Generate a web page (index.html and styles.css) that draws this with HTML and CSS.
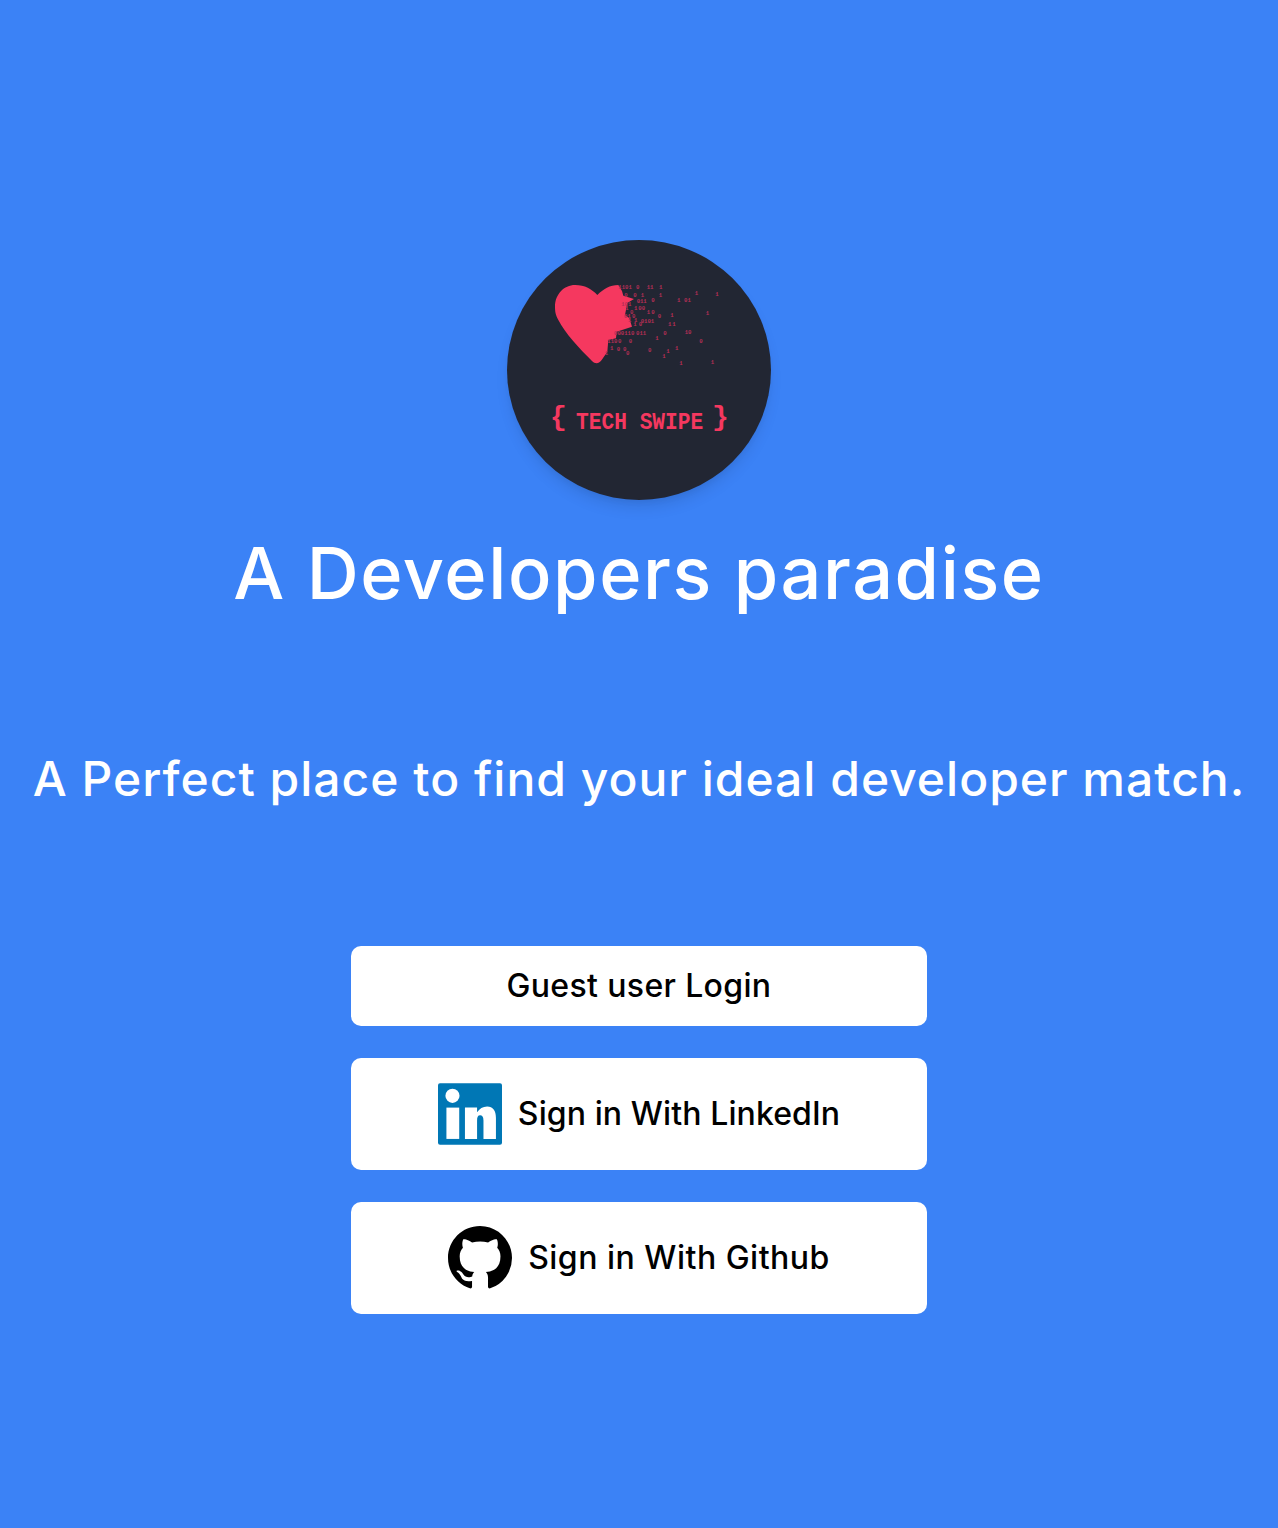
FILE: index.html
```html
<!DOCTYPE html>
<html lang="en">
<head>
  <meta charset="UTF-8">
  <meta name="viewport" content="width=device-width, initial-scale=1.0">
  <title>Tech Swipe</title>
  <link rel="stylesheet" href="styles.css">
</head>
<body>
  <div class="container">
    <!-- Logo -->
    <svg class="logo" viewBox="51 45 792 780" role="img" aria-label="Tech Swipe logo">
      <path class="heart" d="M255 180C285 180 305 192 322 210C340 192 360 180 385 180L396 198L400 212L432 222L412 234L405 270L418 280L426 305L380 320L378 340L355 345L352 380L335 405C328 416 316 418 306 408C270 372 225 325 205 285C196 268 195 258 195 245C195 208 222 180 255 180Z"/>
      <g class="bits">
        <text x="385" y="193">1101</text>
        <text x="438" y="193">0</text>
        <text x="470" y="193">11</text>
        <text x="507" y="193">1</text>
        <text x="403" y="217">0</text>
        <text x="430" y="217">0</text>
        <text x="452" y="217">1</text>
        <text x="506" y="217">1</text>
        <text x="614" y="209">1</text>
        <text x="676" y="214">1</text>
        <text x="440" y="233">01</text>
        <text x="460" y="235">1</text>
        <text x="484" y="231">0</text>
        <text x="561" y="231">1</text>
        <text x="582" y="231">01</text>
        <text x="394" y="242">101</text>
        <text x="406" y="255">1</text>
        <text x="432" y="255">1</text>
        <text x="445" y="255">00</text>
        <text x="420" y="267">0</text>
        <text x="470" y="267">1</text>
        <text x="484" y="267">0</text>
        <text x="402" y="279">01</text>
        <text x="426" y="279">0</text>
        <text x="503" y="279">0</text>
        <text x="541" y="275">1</text>
        <text x="647" y="270">1</text>
        <text x="414" y="291">1</text>
        <text x="432" y="291">1</text>
        <text x="452" y="293">0101</text>
        <text x="430" y="304">1</text>
        <text x="446" y="304">0</text>
        <text x="534" y="304">1</text>
        <text x="547" y="304">1</text>
        <text x="372" y="329">000110</text>
        <text x="438" y="329">011</text>
        <text x="520" y="329">0</text>
        <text x="584" y="328">10</text>
        <text x="352" y="353">1</text>
        <text x="362" y="353">10</text>
        <text x="384" y="353">0</text>
        <text x="416" y="353">0</text>
        <text x="496" y="345">1</text>
        <text x="628" y="354">0</text>
        <text x="360" y="376">1</text>
        <text x="380" y="377">0</text>
        <text x="399" y="377">0</text>
        <text x="555" y="374">1</text>
        <text x="474" y="382">0</text>
        <text x="529" y="383">1</text>
        <text x="344" y="389">1</text>
        <text x="408" y="390">0</text>
        <text x="517" y="400">1</text>
        <text x="568" y="419">1</text>
        <text x="662" y="416">1</text>
      </g>
      <text class="logo-brace" x="205" y="600">{</text>
      <text class="logo-name" transform="translate(258 613) scale(0.884 1)">TECH SWIPE</text>
      <text class="logo-brace" x="691" y="600">}</text>
    </svg>

    <h1>A Developers paradise</h1>
    <p class="tagline">A Perfect place to find your ideal developer match.</p>

    <!-- Sign in options -->
    <div class="actions">
      <button class="login-btn guest-btn">Guest user Login</button>
      <button class="login-btn linkedin-btn">
        <svg class="icon" viewBox="295 96 190 190">
          <rect class="in-bg" x="295" y="100" width="190" height="182" rx="6"/>
          <rect class="in-fg" x="320" y="172" width="38" height="93"/>
          <circle class="in-fg" cx="338" cy="137" r="21"/>
          <path class="in-fg" d="M375 172H411V186C418 176 428 169 441 169C458 169 467 181 467 203V265H430V210C430 200 426 195 420 195C413 195 411 201 411 210V265H375Z"/>
        </svg>
        Sign in With LinkedIn
      </button>
      <button class="login-btn github-btn">
        <svg class="icon" viewBox="0 0 16 16">
          <path d="M8 0C3.58 0 0 3.58 0 8c0 3.54 2.29 6.53 5.47 7.59.4.07.55-.17.55-.38 0-.19-.01-.82-.01-1.49-2.01.37-2.53-.49-2.69-.94-.09-.23-.48-.94-.82-1.13-.28-.15-.68-.52-.01-.53.63-.01 1.08.58 1.23.82.72 1.21 1.87.87 2.33.66.07-.52.28-.87.51-1.07-1.78-.2-3.64-.89-3.64-3.95 0-.87.31-1.59.82-2.15-.08-.2-.36-1.02.08-2.12 0 0 .67-.21 2.2.82.64-.18 1.32-.27 2-.27.68 0 1.36.09 2 .27 1.53-1.04 2.2-.82 2.2-.82.44 1.1.16 1.92.08 2.12.51.56.82 1.27.82 2.15 0 3.07-1.87 3.75-3.65 3.95.29.25.54.73.54 1.48 0 1.07-.01 1.93-.01 2.2 0 .21.15.46.55.38A8.013 8.013 0 0016 8c0-4.42-3.58-8-8-8z"/>
        </svg>
        Sign in With Github
      </button>
    </div>
  </div>
</body>
</html>
```

FILE: styles.css
```css
body {
  margin: 0;
  padding: 0;
  font-family: Inter, "Open Sans", sans-serif;
  font-weight: 500;
  background: #3b82f6;
  color: #fff;
  text-align: center;
}

.container {
  display: flex;
  flex-direction: column;
  align-items: center;
  min-height: 1288px;
  padding-top: 240px;
}

.logo {
  width: 264px;
  height: 260px;
  border-radius: 50%;
  background: #222633;
  box-shadow: 0 10px 15px -3px rgba(0, 0, 0, 0.1), 0 4px 6px -2px rgba(0, 0, 0, 0.05);
}

.heart {
  fill: #f5385f;
}

.bits text {
  font-family: "Liberation Mono", monospace;
  font-size: 17px;
  font-weight: 700;
  fill: #b52e55;
}

.logo-name {
  font-family: "Liberation Mono", monospace;
  font-size: 72px;
  font-weight: 700;
  fill: #f5385f;
}

.logo-brace {
  font-family: "Liberation Mono", monospace;
  font-size: 84px;
  font-weight: 700;
  text-anchor: middle;
  fill: #f5385f;
}

h1 {
  margin: 24px 0 0;
  font-size: 72px;
  line-height: 98px;
  font-weight: 500;
  letter-spacing: 1.6px;
}

.tagline {
  margin: 121px 0 0;
  font-size: 48px;
  line-height: 72px;
  letter-spacing: 1px;
}

.actions {
  display: flex;
  flex-direction: column;
  gap: 32px;
  width: 576px;
  margin-top: 131px;
}

.login-btn {
  display: flex;
  align-items: center;
  justify-content: center;
  gap: 16px;
  padding: 24px;
  font-family: inherit;
  font-size: 32px;
  font-weight: 500;
  line-height: 32px;
  color: #000;
  background: #fff;
  border: none;
  border-radius: 10px;
  cursor: pointer;
}

.guest-btn {
  letter-spacing: 0.35px;
}

.linkedin-btn {
  letter-spacing: 0.1px;
}

.github-btn {
  letter-spacing: 0.5px;
}

.icon {
  width: 64px;
  height: 64px;
}

.in-bg {
  fill: #0077b5;
}

.in-fg {
  fill: #fff;
}
```
